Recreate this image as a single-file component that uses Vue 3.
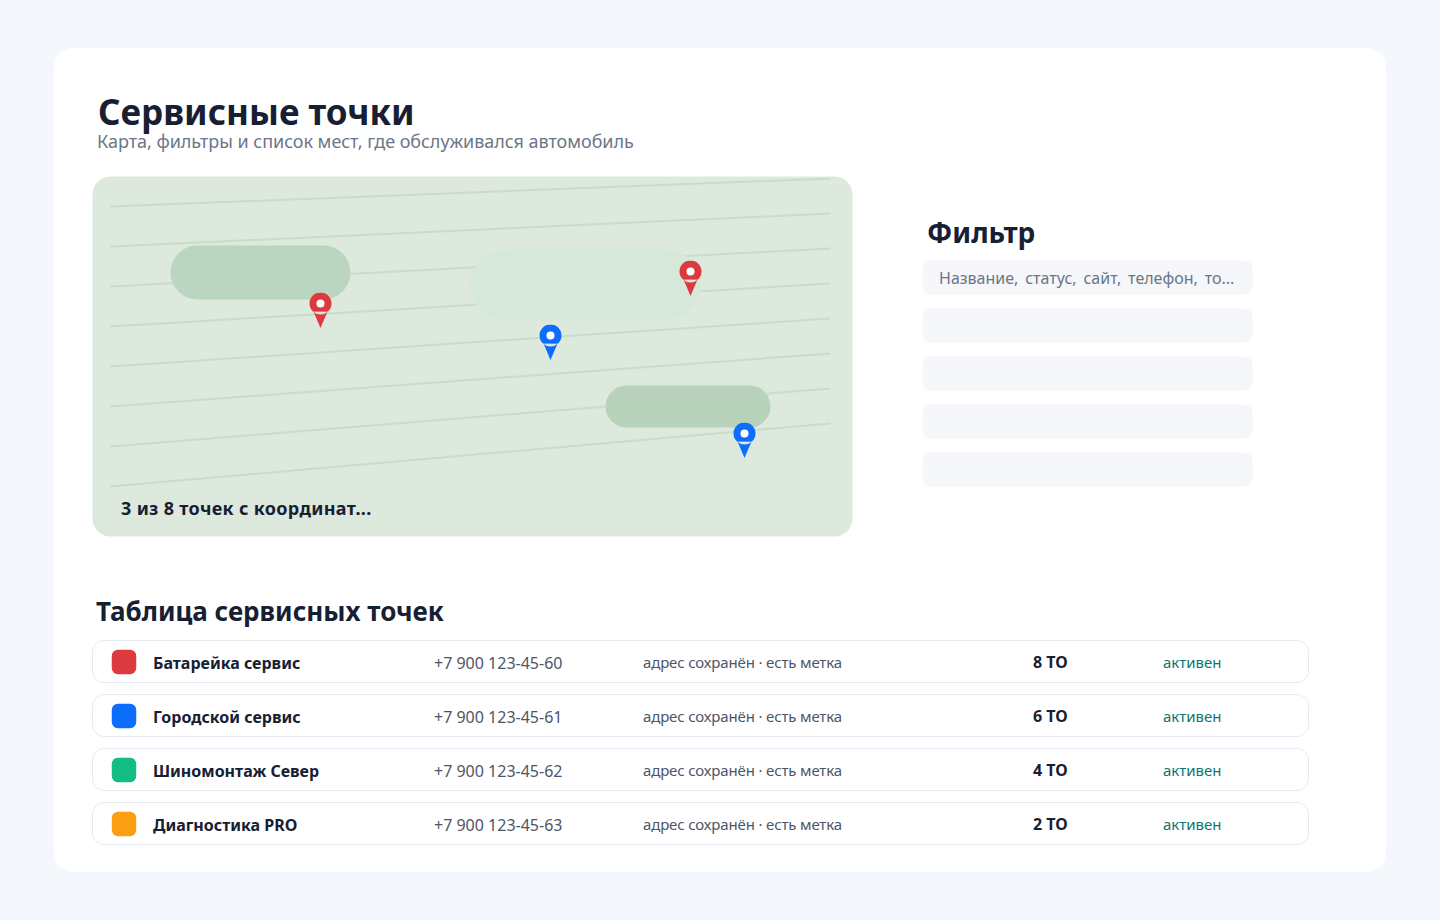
<script setup>
const roads = Array.from({ length: 8 }, (_, i) => ({
  y1: 30 + 40 * i,
  y2: 2 + 35 * i,
}));

const pins = [
  { x: 216, y: 116, color: "#dc3a3e" },
  { x: 586, y: 84, color: "#dc3a3e" },
  { x: 446, y: 148, color: "#0d6efd" },
  { x: 640, y: 246, color: "#0d6efd" },
];

const rows = [
  { name: "Батарейка сервис", phone: "+7 900 123-45-60", visits: "8 ТО", color: "#dc3a3e" },
  { name: "Городской сервис", phone: "+7 900 123-45-61", visits: "6 ТО", color: "#0d6efd" },
  { name: "Шиномонтаж Север", phone: "+7 900 123-45-62", visits: "4 ТО", color: "#12bd82" },
  { name: "Диагностика PRO", phone: "+7 900 123-45-63", visits: "2 ТО", color: "#fd9f10" },
];
</script>

<template>
  <div class="page">
    <main class="card">
      <header class="head">
        <h1>Сервисные точки</h1>
        <p>Карта, фильтры и список мест, где обслуживался автомобиль</p>
      </header>

      <section class="top">
        <div class="map">
          <svg class="roads" width="760" height="360" viewBox="0 0 760 360">
            <line
              v-for="(r, i) in roads"
              :key="i"
              x1="18"
              :y1="r.y1"
              x2="738"
              :y2="r.y2"
            />
          </svg>
          <div class="blob blob-a"></div>
          <div class="blob blob-b"></div>
          <div class="blob blob-c"></div>
          <svg
            v-for="(p, i) in pins"
            :key="'pin' + i"
            class="pin"
            :style="{ left: p.x + 'px', top: p.y + 'px' }"
            width="24"
            height="36"
            viewBox="0 0 24 36"
          >
            <path d="M5 19 L19 19 L12 35.5 Z" :fill="p.color" />
            <path d="M4.45 19 A11 11 0 0 0 19.55 19 Z" fill="#dbe5dc" />
            <path d="M4.45 19 A11 11 0 1 1 19.55 19 Z" :fill="p.color" />
            <circle cx="12" cy="11" r="4" fill="#fff" />
          </svg>
          <div class="map-note">3 из 8 точек с координат...</div>
        </div>

        <aside class="filter">
          <h2>Фильтр</h2>
          <div class="field field-search">
            <span>Название, статус, сайт, телефон, то...</span>
          </div>
          <div class="field"></div>
          <div class="field"></div>
          <div class="field"></div>
          <div class="field"></div>
        </aside>
      </section>

      <section class="table">
        <h2>Таблица сервисных точек</h2>
        <div class="rows">
          <div v-for="row in rows" :key="row.name" class="row">
            <span class="swatch" :style="{ background: row.color }"></span>
            <span class="name">{{ row.name }}</span>
            <span class="phone">{{ row.phone }}</span>
            <span class="addr">адрес сохранён · есть метка</span>
            <span class="visits">{{ row.visits }}</span>
            <span class="status">активен</span>
          </div>
        </div>
      </section>
    </main>
  </div>
</template>

<style>
html,
body {
  margin: 0;
  background: #f4f7fb;
}
</style>

<style scoped>
.page {
  height: 920px;
  padding: 48px 54px;
  box-sizing: border-box;
  font-family: "Noto Sans", sans-serif;
  color: #172033;
}

.card {
  height: 824px;
  box-sizing: border-box;
  padding: 43px 38px 0;
  background: #fff;
  border-radius: 20px;
}

.head {
  padding-left: 5px;
}

.head h1 {
  margin: 1px 0 -1px 1px;
  font-size: 35px;
  line-height: 40px;
  font-weight: 700;
}

.head p {
  margin: 0;
  font-size: 18px;
  line-height: 20px;
  letter-spacing: -0.04px;
  color: #6b7686;
}

.top {
  display: flex;
  gap: 70px;
  margin-top: 25px;
  transform: translate(0.5px, 0.5px);
}

.map {
  position: relative;
  flex: none;
  width: 760px;
  height: 360px;
  overflow: hidden;
  border-radius: 18px;
  background: #dee9de;
}

.roads {
  position: absolute;
  left: 0;
  top: 0;
}

.roads line {
  stroke: #c8dcc8;
  stroke-width: 2;
}

.blob {
  position: absolute;
}

.blob-a {
  left: 78px;
  top: 69px;
  width: 180px;
  height: 54px;
  border-radius: 27px;
  background: #bad5c0;
}

.blob-b {
  left: 378px;
  top: 73px;
  width: 230px;
  height: 71px;
  border-radius: 35px;
  background: #d6e8da;
}

.blob-c {
  left: 513px;
  top: 209px;
  width: 165px;
  height: 42px;
  border-radius: 21px;
  background: #b8d2bc;
}

.pin {
  position: absolute;
}

.map-note {
  position: absolute;
  left: 28.5px;
  bottom: 17px;
  font-size: 18px;
  line-height: 24px;
  font-weight: 700;
  letter-spacing: 0.33px;
}

.filter {
  flex: none;
  width: 330px;
  padding-top: 37.5px;
}

.filter h2 {
  margin: 0 0 12.5px 4.5px;
  font-size: 28px;
  line-height: 34px;
  font-weight: 700;
}

.field {
  height: 33.5px;
  margin-top: 14.5px;
  border-radius: 8px;
  background: #f5f7fb;
}

.field-search {
  display: flex;
  align-items: center;
  margin-top: 0;
  padding: 0 16.5px;
  font-size: 16px;
  word-spacing: 2.7px;
  color: #6b7686;
}

.table {
  margin-top: 57px;
}

.table h2 {
  margin: 0 0 11px 4px;
  font-size: 26px;
  line-height: 36px;
  font-weight: 700;
}

.rows {
  display: flex;
  flex-direction: column;
  gap: 11px;
  width: 1217px;
}

.row {
  display: grid;
  grid-template-columns: 25px 265px 193px 374px 114px 1fr;
  column-gap: 16px;
  align-items: center;
  height: 43px;
  box-sizing: border-box;
  padding: 0 19px;
  border: 1px solid #e6ebf3;
  border-radius: 12px;
  font-size: 15px;
}

.swatch {
  width: 24px;
  height: 24px;
  border-radius: 6px;
  transform: scale(1.02);
}

.name {
  padding-top: 2px;
  font-size: 16px;
  font-weight: 700;
}

.phone {
  padding-top: 2px;
  font-size: 16px;
  color: #4c5667;
}

.addr {
  letter-spacing: -0.15px;
  color: #4c5667;
}

.visits {
  font-size: 16px;
  font-weight: 700;
}

.status {
  color: #0f766e;
}
</style>
